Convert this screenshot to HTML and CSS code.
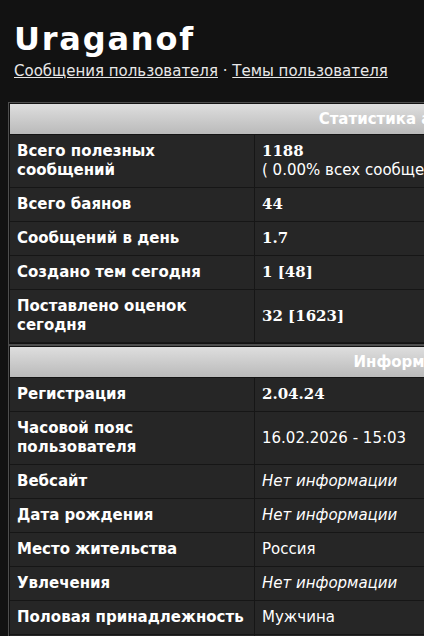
FILE: index.html
```html
<!DOCTYPE html>
<html lang="ru">
<head>
<meta charset="utf-8">
<title>Uraganof</title>
<link rel="stylesheet" href="styles.css">
</head>
<body>
<div class="page">
  <div class="crumbs">
    <span class="home"></span>
    <a class="crumb" href="#">Главная форума</a>
    <span class="sep">›</span>
    <a class="crumb" href="#">Участники</a>
    <span class="sep">›</span>
    <span class="here">Профиль</span>
  </div>
  <h1 class="title">Uraganof</h1>
  <div class="links">
    <a href="#">Сообщения пользователя</a> · <a href="#">Темы пользователя</a>
  </div>

  <div class="box">
    <table class="grid">
      <tr><th colspan="2">Статистика аккаунта</th></tr>
      <tr><td class="label">Всего полезных сообщений</td><td class="value"><b class="num">1188</b><br>( 0.00% всех сообщений форума )</td></tr>
      <tr><td class="label">Всего баянов</td><td class="value"><b class="num">44</b></td></tr>
      <tr><td class="label">Сообщений в день</td><td class="value"><b class="num">1.7</b></td></tr>
      <tr><td class="label">Создано тем сегодня</td><td class="value"><b class="num">1 [48]</b></td></tr>
      <tr><td class="label">Поставлено оценок сегодня</td><td class="value"><b class="num">32 [1623]</b></td></tr>
    </table>
  </div>
  <div class="box">
    <table class="grid">
      <tr><th colspan="2">Информация</th></tr>
      <tr><td class="label">Регистрация</td><td class="value"><b class="num">2.04.24</b></td></tr>
      <tr><td class="label">Часовой пояс пользователя</td><td class="value">16.02.2026 - 15:03</td></tr>
      <tr><td class="label">Вебсайт</td><td class="value"><i>Нет информации</i></td></tr>
      <tr><td class="label">Дата рождения</td><td class="value"><i>Нет информации</i></td></tr>
      <tr><td class="label">Место жительства</td><td class="value">Россия</td></tr>
      <tr><td class="label">Увлечения</td><td class="value"><i>Нет информации</i></td></tr>
      <tr><td class="label">Половая принадлежность</td><td class="value">Мужчина</td></tr>
      <tr><td class="label">Подпись</td><td class="value"><i>Нет информации</i></td></tr>
    </table>
  </div>
</div>
</body>
</html>
```

FILE: styles.css
```css
html, body {
  margin: 0;
  padding: 0;
  background: #121212;
  overflow: hidden;
}
body {
  font-family: "DejaVu Sans", Verdana, sans-serif;
  color: #ffffff;
  font-size: 15px;
}
.page {
  padding: 0 8px;
  width: 820px;
}
.crumbs {
  display: flex;
  align-items: center;
  gap: 8px;
  height: 20px;
  margin-top: -18px;
  font-size: 13px;
  line-height: 20px;
}
.home {
  width: 16px;
  height: 16px;
  border-radius: 50%;
  background: #9cc3f2;
  flex: none;
}
.crumb {
  color: #5ea6f0;
  text-decoration: underline;
}
.sep, .here {
  color: #ffffff;
}
.title {
  margin: 18px 0 0 6px;
  font-size: 32px;
  line-height: 38px;
  font-weight: bold;
  letter-spacing: 1.8px;
  color: #ffffff;
}
.links {
  margin: 4px 0 0 6px;
  line-height: 18px;
  font-size: 15px;
  color: #e8e8e8;
}
.links a {
  color: #e8e8e8;
  text-decoration: underline;
}
.box {
  width: 800px;
  border: 1px solid #4e4e4e;
  padding: 1px;
  background: #121212;
}
.links + .box {
  margin-top: 22px;
}
.grid {
  width: 100%;
  border-collapse: collapse;
}
.grid th {
  height: 30px;
  padding: 0;
  background: linear-gradient(#dedede, #bababa);
  color: #ffffff;
  font-weight: bold;
  font-size: 15px;
  text-align: center;
  border-bottom: 1px solid #141414;
}
.grid td {
  background: #262626;
  border: 1px solid #161616;
  padding: 7px 7px 7px 7px;
  line-height: 19px;
  vertical-align: middle;
  font-size: 15px;
}
.grid tr > td:first-child { border-left: none; }
.label {
  width: 230px;
  font-weight: bold;
}
.value {
  color: #ffffff;
}
.num {
  font-family: "DejaVu Serif", Georgia, serif;
  font-weight: bold;
}
```
